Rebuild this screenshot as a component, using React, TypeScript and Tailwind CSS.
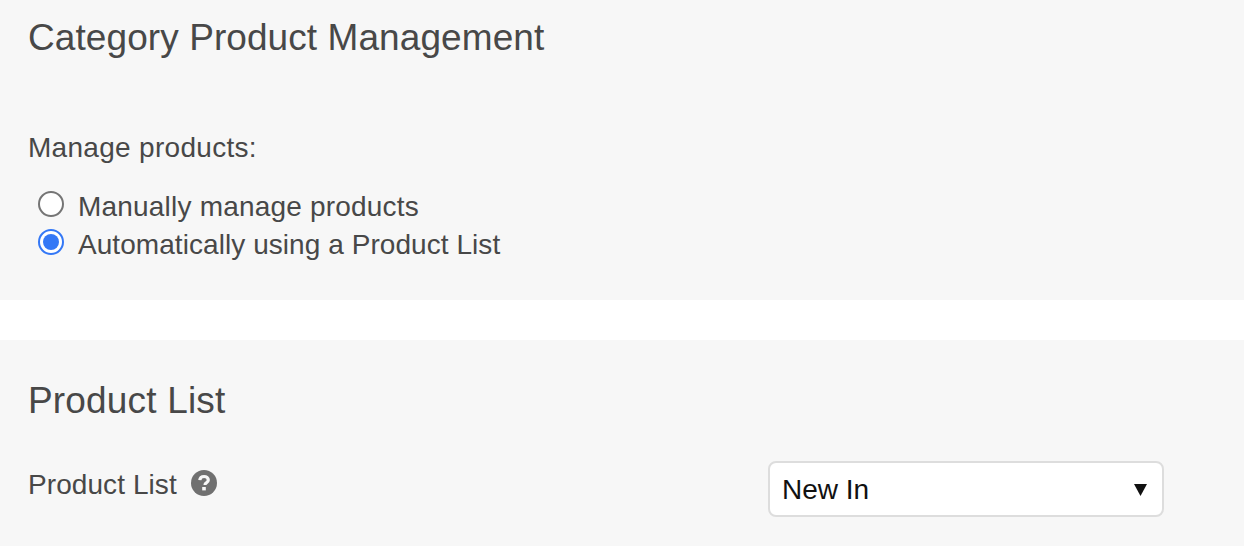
export default function App() {
  return (
    <div className="h-[546px] overflow-hidden bg-white font-['Liberation_Sans',Arial,sans-serif] text-[#484848]">
      <section className="h-[300px] bg-[#f7f7f7] px-7 pt-[18px]">
        <h2 className="text-[37px] leading-10 tracking-[0.08px]">Category Product Management</h2>
        <p className="mt-[74px] text-[28px] leading-8 tracking-[0.3px]">Manage products:</p>
        <div className="mt-[27px] flex flex-col gap-[6px] pl-[10px]">
          <label className="flex h-8 items-center gap-[14px] text-[28px] tracking-[0.2px]">
            <span className="h-[26px] w-[26px] -translate-y-[3px] rounded-full border-2 border-[#757575] bg-white" />
            Manually manage products
          </label>
          <label className="flex h-8 items-center gap-[14px] text-[28px] tracking-[0.06px]">
            <span className="flex h-[26px] w-[26px] -translate-y-[3px] items-center justify-center rounded-full border-2 border-[#3478f6] bg-white">
              <span className="h-[16px] w-[16px] rounded-full bg-[#3478f6]" />
            </span>
            Automatically using a Product List
          </label>
        </div>
      </section>
      <section className="mt-10 h-[206px] bg-[#f7f7f7] px-7 pt-[41px]">
        <h2 className="text-[37px] leading-10 tracking-[0.17px]">Product List</h2>
        <div className="mt-10 flex items-start justify-between pr-[52px]">
          <div className="flex items-center gap-[14px] pt-2">
            <span className="text-[28px] leading-8 tracking-[0.08px]">Product List</span>
            <svg className="-translate-y-[2px]" width="26" height="26" viewBox="0 0 26 26">
              <circle cx="13" cy="13" r="13" fill="#707070" />
              <path d="M8.8 10.2c.2-2.4 2-3.7 4.300-3.700 2.400 0 4.200 1.400 4.200 3.400 0 1.500-.9 2.300-2 3-1 .6-1.300 1-1.300 2.100" fill="none" stroke="#f7f7f7" strokeWidth="3.200" />
              <rect x="11.200" y="17" width="3.600" height="3.400" fill="#f7f7f7" />
            </svg>
          </div>
          <div className="flex h-[56px] w-[396px] items-center justify-between rounded-lg border-2 border-[#dddddd] bg-white pl-[12px] pr-[15px] pt-[2px] text-[28px] text-[#111111]">
            New In
            <svg width="13" height="12" viewBox="0 0 13 12">
              <path d="M0 0h13L6.500 12z" fill="#111111" />
            </svg>
          </div>
        </div>
      </section>
    </div>
  );
}
